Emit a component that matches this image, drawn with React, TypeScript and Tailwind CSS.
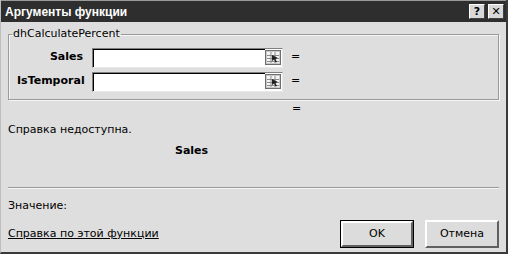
import React from 'react';

function RefIcon() {
  return (
    <svg width="16" height="15" viewBox="0 0 16 15" className="block">
      <rect x="0.5" y="0.5" width="15" height="14" fill="#c8c8c8" stroke="#6e6e6e" />
      <rect x="2" y="2" width="12" height="11" fill="#f4f4f4" />
      <path d="M2 5.5h12M2 8.5h12M2 11.5h12M6 2v11M10 2v11" stroke="#8a8a8a" strokeWidth="1" />
      <path d="M7 5l6 3-2.5 1 1.5 3-1.5.6-1.4-3L7 11z" fill="#222" />
    </svg>
  );
}

function CaptionButton({ children }: { children: React.ReactNode }) {
  return (
    <div className="w-[16px] h-[15px] bg-[#d8d8d8] border border-t-white border-l-white border-r-[#404040] border-b-[#404040] flex items-center justify-center text-[11px] font-bold leading-none text-black">
      {children}
    </div>
  );
}

function ArgRow({ label }: { label: string }) {
  return (
    <div className="flex items-center h-[24px]">
      <div className="w-[75px] text-right font-bold pr-[9px]">{label}</div>
      <div className="w-[191px] h-[20px] bg-white border border-t-[#808080] border-l-[#808080] border-r-[#e8e8e8] border-b-[#e8e8e8] flex">
        <div className="flex-1 border-t border-l border-black" />
        <div className="pt-[1px] pr-[1px]">
          <RefIcon />
        </div>
      </div>
      <div className="ml-[8px]">=</div>
    </div>
  );
}

function Button({ children, primary }: { children: React.ReactNode; primary?: boolean }) {
  return (
    <div className={`w-[74px] h-[28px] ${primary ? 'border border-black' : ''}`}>
      <div className="w-full h-full bg-[#dcdcdc] border-2 border-t-white border-l-white border-r-[#606060] border-b-[#606060] flex items-center justify-center">
        {children}
      </div>
    </div>
  );
}

export default function App() {
  return (
    <div
      className="w-[508px] h-[254px] bg-[#dedede] flex flex-col text-[11px] text-black border-r-2 border-b-2 border-r-[#3a3a3a] border-b-[#3a3a3a] border-l border-l-[#bdbdbd] overflow-hidden"
      style={{ fontFamily: 'Tahoma, "DejaVu Sans", sans-serif' }}
    >
      <div className="h-[22px] bg-[#2e2e2e] flex items-center pl-[4px] pr-[2px] border-t border-[#9a9a9a]">
        <div
          className="flex-1 text-white font-bold text-[12px]"
          style={{ fontFamily: '"Liberation Sans", Arial, sans-serif' }}
        >
          Аргументы функции
        </div>
        <div className="flex gap-[3px]">
          <CaptionButton>?</CaptionButton>
          <CaptionButton>✕</CaptionButton>
        </div>
      </div>

      <div className="flex-1 flex flex-col px-[7px] pt-[4px]">
        <fieldset className="border border-[#9a9a9a] px-[8px] pb-[5px] pt-[3px] shadow-[inset_1px_1px_0_#f6f6f6,1px_1px_0_#f6f6f6]">
          <legend className="px-[1px] ml-[-5px] text-[11px]">dhCalculatePercent</legend>
          <ArgRow label="Sales" />
          <ArgRow label="IsTemporal" />
        </fieldset>

        <div className="pl-[284px] h-[18px] leading-[18px]">=</div>

        <div className="mt-[4px]">Справка недоступна.</div>
        <div className="mt-[5px] pl-[167px] font-bold">Sales</div>

        <div className="mt-[27px] border-t border-t-[#9a9a9a] border-b border-b-[#f6f6f6]" />

        <div className="mt-[9px]">Значение:</div>

        <div className="mt-[6px] flex items-center">
          <div className="flex-1 underline">Справка по этой функции</div>
          <div className="flex gap-[11px]">
            <Button primary>OK</Button>
            <Button>Отмена</Button>
          </div>
        </div>
      </div>
    </div>
  );
}
